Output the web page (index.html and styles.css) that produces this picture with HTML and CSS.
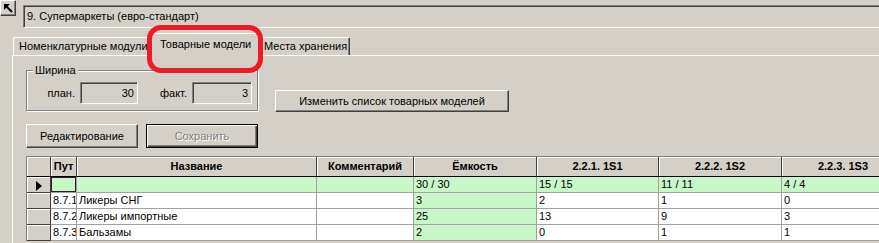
FILE: index.html
```html
<!DOCTYPE html>
<html lang="ru">
<head>
    <meta charset="UTF-8">
    <title>Супермаркеты - Товарные модели</title>
    <link rel="stylesheet" href="styles.css">
</head>
<body>
    <div class="top">
        <div class="corner-btn">
            <svg width="10" height="10" viewBox="0 0 10 10">
                <polygon points="1,1 7,1 1,7" fill="#000"/>
                <line x1="3" y1="3" x2="9" y2="9" stroke="#000" stroke-width="2"/>
            </svg>
        </div>
        <div class="title-field">9. Супермаркеты (евро-стандарт)</div>
    </div>

    <div class="tabs">
        <div class="tab first">Номенклатурные модули</div>
        <div class="tab active">Товарные модели</div>
        <div class="tab last">Места хранения</div>
    </div>

    <div class="page">
        <div class="settings">
            <div class="group">
                <div class="group-title">Ширина</div>
                <div class="fields">
                    <span class="lbl plan">план.</span>
                    <span class="num plan">30</span>
                    <span class="lbl fact">факт.</span>
                    <span class="num fact">3</span>
                </div>
            </div>
            <button class="btn btn-change">Изменить список товарных моделей</button>
        </div>

        <div class="actions">
            <button class="btn btn-action">Редактирование</button>
            <button class="btn btn-action disabled">Сохранить</button>
        </div>

        <div class="grid-wrap">
            <table class="grid">
                <thead>
                    <tr>
                        <th class="c-ind"></th>
                        <th class="c-put">Пут</th>
                        <th class="c-name">Название</th>
                        <th class="c-comm">Комментарий</th>
                        <th class="c-cap">Ёмкость</th>
                        <th class="c-s">2.2.1. 1S1</th>
                        <th class="c-s2">2.2.2. 1S2</th>
                        <th class="c-s2">2.2.3. 1S3</th>
                    </tr>
                </thead>
                <tbody>
                    <tr class="total">
                        <td class="ind">
                            <svg width="6" height="10" viewBox="0 0 6 10"><polygon points="0,0 6,5 0,10" fill="#000"/></svg>
                        </td>
                        <td class="focus"></td>
                        <td></td>
                        <td></td>
                        <td class="cap">30 / 30</td>
                        <td>15 / 15</td>
                        <td>11 / 11</td>
                        <td>4 / 4</td>
                    </tr>
                    <tr>
                        <td class="ind"></td>
                        <td>8.7.1</td>
                        <td>Ликеры СНГ</td>
                        <td></td>
                        <td class="cap">3</td>
                        <td>2</td>
                        <td>1</td>
                        <td>0</td>
                    </tr>
                    <tr>
                        <td class="ind"></td>
                        <td>8.7.2</td>
                        <td>Ликеры импортные</td>
                        <td></td>
                        <td class="cap">25</td>
                        <td>13</td>
                        <td>9</td>
                        <td>3</td>
                    </tr>
                    <tr>
                        <td class="ind"></td>
                        <td>8.7.3</td>
                        <td>Бальзамы</td>
                        <td></td>
                        <td class="cap">2</td>
                        <td>0</td>
                        <td>1</td>
                        <td>1</td>
                    </tr>
                </tbody>
            </table>
        </div>
    </div>

    <div class="marker"></div>
</body>
</html>
```

FILE: styles.css
```css
body {
    margin: 0;
    width: 879px;
    height: 243px;
    overflow: hidden;
    position: relative;
    background: #d4d0c8;
    font-family: "Liberation Sans", Arial, sans-serif;
    font-size: 11px;
    color: #000;
}

/* top line */
.top {
    display: flex;
    height: 28px;
}
.corner-btn {
    width: 16px;
    height: 16px;
    box-sizing: border-box;
    border: 1px solid;
    border-color: #fff #404040 #404040 #fff;
    box-shadow: inset -1px -1px #808080;
    display: flex;
    align-items: center;
    justify-content: center;
}
.title-field {
    flex: 1;
    margin: 5px -20px 0 7px;
    height: 23px;
    box-sizing: border-box;
    border: 1px solid;
    border-color: #808080 #fff #fff #808080;
    box-shadow: inset 1px 1px #404040;
    padding-left: 3px;
    line-height: 21px;
    white-space: nowrap;
}

/* tabs */
.tabs {
    display: flex;
    align-items: flex-end;
    height: 27px;
    padding-left: 13px;
}
.tab {
    height: 18px;
    box-sizing: border-box;
    border: 1px solid;
    border-color: #fff #404040 transparent #fff;
    border-bottom: none;
    box-shadow: inset -1px 0 #808080;
    border-radius: 2px 2px 0 0;
    padding-left: 5px;
    line-height: 16px;
    white-space: nowrap;
    overflow: hidden;
}
.tab.first {
    width: 137px;
}
.tab.active {
    position: relative;
    z-index: 1;
    width: 112px;
    height: 23px;
    margin-left: -2px;
    margin-bottom: -1px;
    padding-left: 11px;
    line-height: 20px;
    background: #d4d0c8;
}
.tab.last {
    width: 92px;
    margin-left: -2px;
    padding-left: 5px;
}

/* tab page */
.page {
    margin-left: 12px;
    height: 187px;
    border-top: 1px solid #fff;
    border-left: 1px solid #fff;
    padding-left: 13px;
    overflow: hidden;
}
.settings {
    display: flex;
    align-items: flex-start;
    margin-top: 14px;
}
.group {
    width: 232px;
    height: 41px;
    box-sizing: border-box;
    border: 1px solid #808080;
    box-shadow: inset 1px 1px #fff, 1px 1px #fff;
    display: flex;
    flex-direction: column;
}
.group-title {
    align-self: flex-start;
    margin: -7px 0 0 6px;
    padding: 0 2px;
    background: #d4d0c8;
    line-height: 13px;
}
.fields {
    display: flex;
    align-items: center;
    margin-top: 5px;
}
.lbl {
    box-sizing: border-box;
    text-align: right;
    padding-right: 5px;
}
.lbl.plan {
    width: 53px;
}
.lbl.fact {
    width: 54px;
}
.num {
    height: 22px;
    box-sizing: border-box;
    border: 1px solid;
    border-color: #808080 #fff #fff #808080;
    box-shadow: inset 1px 1px #404040;
    text-align: right;
    padding-right: 3px;
    line-height: 20px;
}
.num.plan {
    width: 58px;
}
.num.fact {
    width: 60px;
}

/* buttons */
.btn {
    font: inherit;
    color: #000;
    background: #d4d0c8;
    height: 22px;
    padding: 0;
    box-sizing: border-box;
    border: 1px solid;
    border-color: #fff #404040 #404040 #fff;
    box-shadow: inset -1px -1px #808080;
}
.btn-change {
    width: 234px;
    margin: 20px 0 0 17px;
}
.actions {
    display: flex;
    gap: 8px;
    margin-top: 12px;
}
.btn-action {
    width: 112px;
    height: 24px;
}
.btn.disabled {
    color: #808080;
    text-shadow: 1px 1px #fff;
    border-color: #000;
    box-shadow: inset 1px 1px #fff, inset -1px -1px #404040, inset -2px -2px #808080;
}

/* grid */
.grid-wrap {
    margin-top: 8px;
    border-top: 1px solid #808080;
    border-left: 1px solid #808080;
}
.grid {
    border-collapse: separate;
    border-spacing: 0;
    table-layout: fixed;
    width: 878px;
}
.grid th {
    box-sizing: border-box;
    padding: 0;
    line-height: 19px;
    font-weight: bold;
    text-align: center;
    background: #d4d0c8;
    border-right: 1px solid #404040;
    border-bottom: 1px solid #000;
    box-shadow: inset 1px 1px #fff;
    white-space: nowrap;
    overflow: hidden;
}
.c-ind { width: 24px; }
.c-put { width: 26px; }
.c-name { width: 240px; }
.c-comm { width: 97px; }
.c-cap { width: 123px; }
.c-s { width: 122px; }
.c-s2 { width: 123px; }

.grid td {
    box-sizing: border-box;
    padding: 0 0 0 2px;
    line-height: 15px;
    height: 16px;
    background: #fff;
    border-right: 1px solid #a0a0a0;
    border-bottom: 1px solid #a0a0a0;
    white-space: nowrap;
    overflow: hidden;
}
.grid td.ind {
    background: #d4d0c8;
    border-right: 1px solid #404040;
    border-bottom: 1px solid #404040;
    box-shadow: inset 1px 1px #fff;
    text-align: center;
    padding: 0;
}
.grid td.ind svg {
    display: block;
    margin: 3px auto 0 9px;
}
.grid tr.total td:not(.ind),
.grid td.cap {
    background: #c8f8c8;
}
.grid td.focus {
    box-shadow: inset 0 0 0 1px #301830;
}

/* red annotation */
.marker {
    position: absolute;
    left: 147px;
    top: 25px;
    width: 116px;
    height: 48px;
    box-sizing: border-box;
    border: 5px solid #ed1c24;
    border-radius: 14px;
    z-index: 5;
    pointer-events: none;
}
```
